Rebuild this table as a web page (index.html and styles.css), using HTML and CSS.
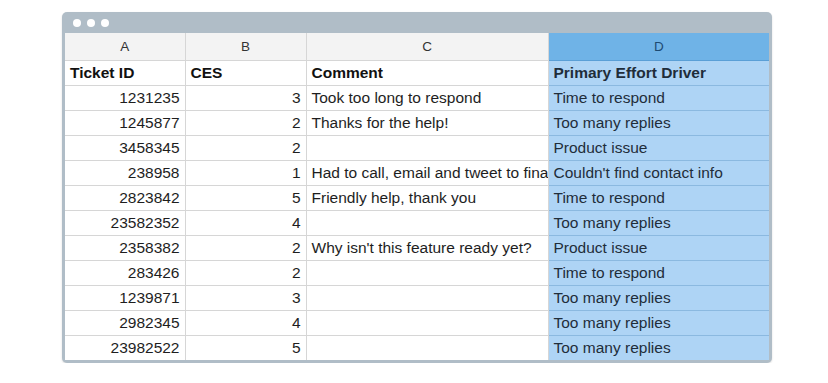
FILE: index.html
```html
<!DOCTYPE html>
<html lang="en">
<head>
    <meta charset="UTF-8">
    <title>CES Sheet</title>
    <link rel="stylesheet" href="styles.css">
</head>
<body>
    <div class="window">
        <div class="title-bar">
            <span class="dot"></span>
            <span class="dot"></span>
            <span class="dot"></span>
        </div>
        <table class="sheet">
            <colgroup>
                <col class="col-a">
                <col class="col-b">
                <col class="col-c">
                <col class="col-d">
            </colgroup>
            <thead>
                <tr class="letters">
                    <th>A</th><th>B</th><th>C</th><th class="sel">D</th>
                </tr>
            </thead>
            <tbody>
                <tr class="heading">
                    <td>Ticket ID</td><td>CES</td><td>Comment</td><td class="sel">Primary Effort Driver</td>
                </tr>
                <tr><td class="num">1231235</td><td class="num">3</td><td>Took too long to respond</td><td class="sel">Time to respond</td></tr>
                <tr><td class="num">1245877</td><td class="num">2</td><td>Thanks for the help!</td><td class="sel">Too many replies</td></tr>
                <tr><td class="num">3458345</td><td class="num">2</td><td></td><td class="sel">Product issue</td></tr>
                <tr><td class="num">238958</td><td class="num">1</td><td class="clip">Had to call, email and tweet to fina</td><td class="sel">Couldn't find contact info</td></tr>
                <tr><td class="num">2823842</td><td class="num">5</td><td>Friendly help, thank you</td><td class="sel">Time to respond</td></tr>
                <tr><td class="num">23582352</td><td class="num">4</td><td></td><td class="sel">Too many replies</td></tr>
                <tr><td class="num">2358382</td><td class="num">2</td><td>Why isn't this feature ready yet?</td><td class="sel">Product issue</td></tr>
                <tr><td class="num">283426</td><td class="num">2</td><td></td><td class="sel">Time to respond</td></tr>
                <tr><td class="num">1239871</td><td class="num">3</td><td></td><td class="sel">Too many replies</td></tr>
                <tr><td class="num">2982345</td><td class="num">4</td><td></td><td class="sel">Too many replies</td></tr>
                <tr><td class="num">23982522</td><td class="num">5</td><td></td><td class="sel">Too many replies</td></tr>
            </tbody>
        </table>
    </div>
</body>
</html>
```

FILE: styles.css
```css
body {
    margin: 0;
    background: #fff;
    font-family: "Liberation Sans", Arial, sans-serif;
    color: #1e1e1e;
}

.window {
    width: 704px;
    margin: 12px 0 0 62px;
    background: #b0bdc7;
    border-radius: 5px;
    padding: 0 3px 3px 3px;
    box-shadow: 0 1px 2px rgba(0, 0, 0, 0.15);
}

.title-bar {
    height: 21px;
    display: flex;
    align-items: center;
    gap: 6px;
    padding-left: 8px;
}

.dot {
    width: 8px;
    height: 8px;
    border-radius: 50%;
    background: #fff;
}

.sheet {
    border-collapse: collapse;
    table-layout: fixed;
    width: 704px;
    background: #fff;
    font-size: 15.5px;
}

.col-a { width: 120px; }
.col-b { width: 121px; }
.col-c { width: 242px; }
.col-d { width: 221px; }

.sheet th,
.sheet td {
    border: 1px solid #d6d6d6;
    padding: 0 5px;
    height: 24px;
    white-space: nowrap;
    overflow: hidden;
    text-align: left;
}

.sheet tr:first-child td { border-top: none; }
.sheet tr td:first-child,
.sheet tr th:first-child { border-left: none; }
.sheet tr td:last-child,
.sheet tr th:last-child { border-right: none; }
.sheet tbody tr:last-child td { border-bottom: none; }

.letters th {
    height: 27px;
    background: #f3f3f3;
    font-weight: normal;
    font-size: 13.5px;
    color: #333;
    text-align: center;
    border-top: none;
}

.letters th.sel {
    background: #6fb3e7;
    color: #1d4a72;
    border-color: #5a9fd6;
}

.heading td {
    font-weight: bold;
    color: #111;
}

.num {
    text-align: right !important;
}

.clip {
    text-overflow: clip;
}

.sheet td.sel {
    background: #aed4f5;
    border-color: #8bb9e0;
    color: #1f2d3a;
}
```
